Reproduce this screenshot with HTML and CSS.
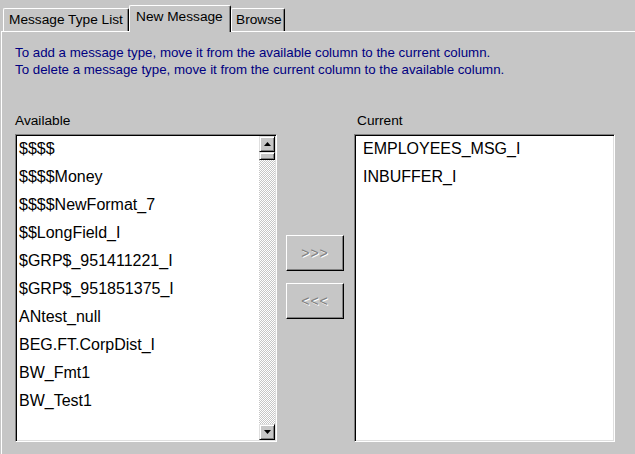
FILE: index.html
```html
<!DOCTYPE html>
<html>
<head>
<meta charset="utf-8">
<link rel="stylesheet" href="styles.css">
</head>
<body>
<div class="tabs">
  <div class="tab tab-list">Message Type List</div>
  <div class="tab tab-new active">New Message</div>
  <div class="tab tab-browse">Browse</div>
</div>
<div class="panel">
  <p class="help">To add a message type, move it from the available column to the current column.<br>To delete a message type, move it from the current column to the available column.</p>
  <div class="columns">
    <div class="col col-avail">
      <div class="label">Available</div>
      <div class="listbox">
        <ul class="items">
          <li>$$$$</li>
          <li>$$$$Money</li>
          <li>$$$$NewFormat_7</li>
          <li>$$LongField_I</li>
          <li>$GRP$_951411221_I</li>
          <li>$GRP$_951851375_I</li>
          <li>ANtest_null</li>
          <li>BEG.FT.CorpDist_I</li>
          <li>BW_Fmt1</li>
          <li>BW_Test1</li>
        </ul>
        <div class="scrollbar">
          <div class="sb-btn"><svg width="7" height="4" viewBox="0 0 7 4"><polygon points="3.5,0 7,4 0,4" fill="#000"/></svg></div>
          <div class="sb-thumb"></div>
          <div class="sb-track"></div>
          <div class="sb-btn"><svg width="7" height="4" viewBox="0 0 7 4"><polygon points="0,0 7,0 3.5,4" fill="#000"/></svg></div>
        </div>
      </div>
    </div>
    <div class="actions">
      <button class="move" disabled>&gt;&gt;&gt;</button>
      <button class="move" disabled>&lt;&lt;&lt;</button>
    </div>
    <div class="col col-current">
      <div class="label">Current</div>
      <div class="listbox">
        <ul class="items">
          <li>EMPLOYEES_MSG_I</li>
          <li>INBUFFER_I</li>
        </ul>
      </div>
    </div>
  </div>
</div>
</body>
</html>
```
FILE: styles.css
```css
html, body {
  margin: 0;
  padding: 0;
  background: #c6c6c6;
  font-family: "Liberation Sans", Arial, sans-serif;
}
body {
  width: 635px;
  height: 454px;
  overflow: hidden;
}
.tabs {
  display: flex;
  align-items: flex-end;
  height: 31px;
  padding-left: 3px;
}
.tab {
  box-sizing: border-box;
  height: 23px;
  padding: 0 0 0 5px;
  font-size: 13.7px;
  line-height: 22px;
  color: #000;
  white-space: nowrap;
  border-left: 1px solid #fff;
  border-top: 1px solid #fff;
  border-right: 1px solid #000;
  box-shadow: inset -1px 0 #808080;
  border-radius: 2px 2px 0 0;
  background: #c6c6c6;
}
.tab-list { width: 126px; }
.tab-new { width: 102px; padding-left: 6px; }
.tab-browse { width: 54px; padding-left: 4px; }
.tab.active {
  height: 27px;
  margin-bottom: -1px;
  line-height: 22px;
  position: relative;
  z-index: 1;
}
.panel {
  margin-left: 1px;
  border-top: 1px solid #fff;
  border-left: 1px solid #fff;
  padding: 12px 0 0 13px;
  height: 430px;
}
.help {
  margin: 0;
  color: #000080;
  font-size: 13.3px;
  line-height: 17px;
}
.columns {
  display: flex;
  margin-top: 34px;
}
.col-avail { width: 262px; }
.col-current { width: 261px; margin-left: 10px; }
.label {
  font-size: 13.7px;
  line-height: 17px;
  color: #000;
  margin-bottom: 5px;
}
.col-current .label { padding-left: 3px; }
.listbox {
  box-sizing: border-box;
  height: 308px;
  display: flex;
  background: #fff;
  border: 1px solid;
  border-color: #808080 #fff #fff #808080;
  box-shadow: inset 1px 1px #000, inset -1px -1px #dfdfdf;
  padding: 1px;
  overflow: hidden;
}
.items {
  flex: 1;
  list-style: none;
  margin: -1px 0 0 0;
  padding: 0 0 0 2px;
  font-size: 16px;
  line-height: 28px;
  color: #000;
  white-space: nowrap;
}
.col-current .items { padding-left: 7px; }
.scrollbar {
  width: 16px;
  display: flex;
  flex-direction: column;
}
.sb-btn, .sb-thumb {
  box-sizing: border-box;
  background: #c6c6c6;
  border: 1px solid;
  border-color: #dfdfdf #000 #000 #dfdfdf;
  box-shadow: inset 1px 1px #fff, inset -1px -1px #808080;
}
.sb-btn {
  height: 16px;
  display: flex;
  align-items: center;
  justify-content: center;
}
.sb-btn svg { display: block; }
.sb-thumb { height: 8px; }
.sb-track {
  flex: 1;
  background: repeating-conic-gradient(#fff 0 25%, #c6c6c6 0 50%) 0 0 / 2px 2px;
}
.actions {
  display: flex;
  flex-direction: column;
  gap: 12px;
  margin: 123px 0 0 9px;
}
.move {
  box-sizing: border-box;
  width: 58px;
  height: 36px;
  margin: 0;
  padding: 0;
  background: #c6c6c6;
  border: 1px solid;
  border-color: #fff #000 #000 #fff;
  box-shadow: inset -1px -1px #808080;
  font-family: "Liberation Sans", Arial, sans-serif;
  font-size: 14px;
  letter-spacing: 1px;
  color: #808080;
  text-shadow: 1px 1px #fff;
}
```
